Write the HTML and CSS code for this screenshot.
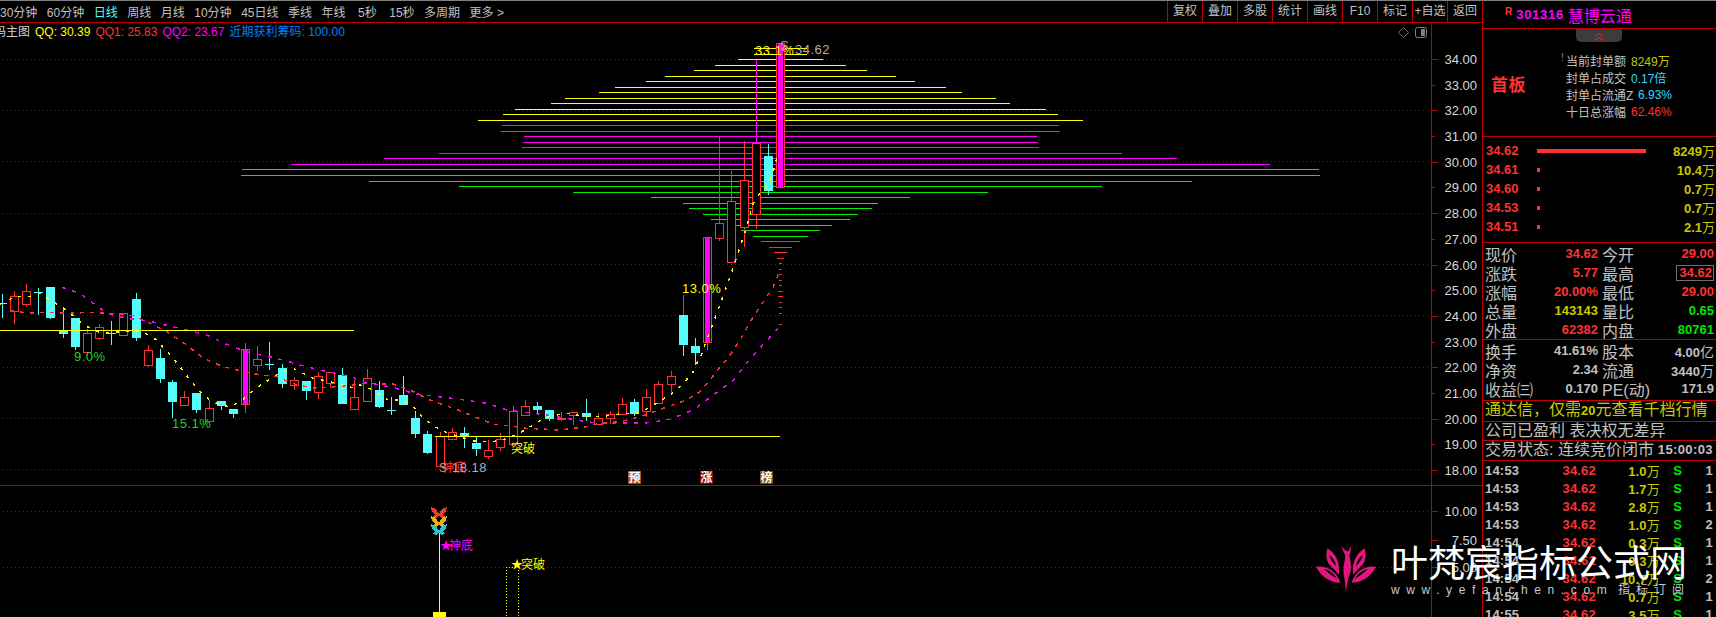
FILE: index.html
```html
<!DOCTYPE html>
<html lang="zh-CN">

<head>
    <meta charset="UTF-8">
    <title>慧博云通 301316</title>
    <link rel="stylesheet" href="styles.css">
</head>

<body>
    <div class="terminal">
        <div class="main">
            <div class="toolbar">
                <div class="periods">
                    <span>30分钟</span>
                    <span>60分钟</span>
                    <span class="active">日线</span>
                    <span>周线</span>
                    <span>月线</span>
                    <span>10分钟</span>
                    <span>45日线</span>
                    <span>季线</span>
                    <span>年线</span>
                    <span class="wide">5秒</span>
                    <span class="wide">15秒</span>
                    <span>多周期</span>
                    <span>更多 &gt;</span>
                </div>
                <div class="tools">
                    <span>复权</span>
                    <span>叠加</span>
                    <span>多股</span>
                    <span>统计</span>
                    <span>画线</span>
                    <span>F10</span>
                    <span>标记</span>
                    <span>+自选</span>
                    <span>返回</span>
                </div>
            </div>

            <div class="chart-wrap">
                <svg id="chart" class="chart" width="1482" height="594" viewBox="0 23 1482 594"></svg>

                <div class="legend">
                    <span class="legend-name">筹码主图</span>
                    <span class="yellow">QQ: 30.39</span>
                    <span class="red">QQ1: 25.83</span>
                    <span class="magenta">QQ2: 23.67</span>
                    <span class="blue">近期获利筹码: 100.00</span>
                </div>

                <svg class="chart-icons" width="32" height="14" viewBox="0 0 32 14">
                    <path d="M5.5 1.5 L10.5 6.5 L5.5 11.5 L0.5 6.5 Z" fill="none" stroke="#707070" />
                    <rect x="17.5" y="1.5" width="11" height="10" rx="2" fill="none" stroke="#808080" />
                    <rect x="23" y="3" width="4" height="7" fill="#808080" />
                </svg>
            </div>
        </div>

        <div class="side">
            <div class="stock">
                <span class="stock-flag">R</span>
                <span class="stock-code">301316</span>
                <span class="stock-name">慧博云通</span>
            </div>

            <div class="seal">
                <div class="seal-tab">
                    <svg width="12" height="8" viewBox="0 0 12 8">
                        <path d="M2 3.5 L6 0.5 L10 3.5 M2 7.5 L6 4.5 L10 7.5" fill="none" stroke="#e03030" />
                    </svg>
                </div>
                <div class="seal-tag">首板</div>
                <div class="seal-info">
                    <span class="seal-label"><i class="seal-mark">!</i>当前封单额</span><span class="olive">8249万</span>
                    <span class="seal-label">封单占成交</span><span class="sky">0.17倍</span>
                    <span class="seal-label">封单占流通Z</span><span class="sky seal-shift">6.93%</span>
                    <span class="seal-label">十日总涨幅</span><span class="red">62.46%</span>
                </div>
            </div>

            <div class="book">
                <div class="book-row"><b class="red">34.62</b><i class="bar bar-full"></i><b class="olive">8249<span class="unit">万</span></b></div>
                <div class="book-row"><b class="red">34.61</b><i class="bar"></i><b class="olive">10.4<span class="unit">万</span></b></div>
                <div class="book-row"><b class="red">34.60</b><i class="bar"></i><b class="olive">0.7<span class="unit">万</span></b></div>
                <div class="book-row"><b class="red">34.53</b><i class="bar"></i><b class="olive">0.7<span class="unit">万</span></b></div>
                <div class="book-row"><b class="red">34.51</b><i class="bar"></i><b class="olive">2.1<span class="unit">万</span></b></div>
            </div>

            <div class="quote">
                <span>现价</span><b class="red">34.62</b><span>今开</span><b class="red">29.00</b>
                <span>涨跌</span><b class="red">5.77</b><span>最高</span><b class="red"><em class="boxed">34.62</em></b>
                <span>涨幅</span><b class="red">20.00%</b><span>最低</span><b class="red">29.00</b>
                <span>总量</span><b class="olive">143143</b><span>量比</span><b class="green">0.65</b>
                <span>外盘</span><b class="red">62382</b><span>内盘</span><b class="green">80761</b>
            </div>

            <div class="quote finance">
                <span>换手</span><b>41.61%</b><span>股本</span><b>4.00<span class="unit">亿</span></b>
                <span>净资</span><b>2.34</b><span>流通</span><b>3440<span class="unit">万</span></b>
                <span>收益㈢</span><b>0.170</b><span>PE(动)</span><b>171.9</b>
            </div>

            <div class="line ad">通达信，仅需<b>20</b>元查看千档行情</div>
            <div class="line note">公司已盈利 表决权无差异</div>
            <div class="line state"><span>交易状态: 连续竞价闭市</span><b>15:00:03</b></div>

            <div class="ticks">
                <div class="tick"><b>14:53</b><b class="red">34.62</b><b class="olive">1.0<span class="unit">万</span></b><b class="green">S</b><b>1</b></div>
                <div class="tick"><b>14:53</b><b class="red">34.62</b><b class="olive">1.7<span class="unit">万</span></b><b class="green">S</b><b>1</b></div>
                <div class="tick"><b>14:53</b><b class="red">34.62</b><b class="olive">2.8<span class="unit">万</span></b><b class="green">S</b><b>1</b></div>
                <div class="tick"><b>14:53</b><b class="red">34.62</b><b class="olive">1.0<span class="unit">万</span></b><b class="green">S</b><b>2</b></div>
                <div class="tick"><b>14:54</b><b class="red">34.62</b><b class="olive">0.3<span class="unit">万</span></b><b class="green">S</b><b>1</b></div>
                <div class="tick"><b>14:54</b><b class="red">34.62</b><b class="olive">0.3<span class="unit">万</span></b><b class="green">S</b><b>1</b></div>
                <div class="tick"><b>14:54</b><b class="red">34.62</b><b class="olive">10.7<span class="unit">万</span></b><b class="green">S</b><b>2</b></div>
                <div class="tick"><b>14:54</b><b class="red">34.62</b><b class="olive">0.7<span class="unit">万</span></b><b class="green">S</b><b>1</b></div>
                <div class="tick"><b>14:55</b><b class="red">34.62</b><b class="olive">3.5<span class="unit">万</span></b><b class="green">S</b><b>1</b></div>
            </div>
        </div>

        <!-- site watermark lies over the chart and the panel -->
        <div class="watermark">
            <svg class="lotus" width="70" height="60" viewBox="0 0 210 180">
                <path d="M18 80 C50 76 78 92 92 128 C60 128 34 110 18 80 Z M42 86 C56 100 70 110 82 116 C72 100 58 90 42 86 Z" fill-rule="evenodd" />
                <path d="M198 80 C166 76 138 92 124 128 C156 128 182 110 198 80 Z M174 86 C160 100 146 110 134 116 C144 100 158 90 174 86 Z" fill-rule="evenodd" />
                <path d="M52 25 C78 42 92 68 86 106 C76 88 62 80 54 68 C48 56 48 40 52 25 Z M58 44 C60 58 68 68 78 78 C76 62 68 52 58 44 Z" fill-rule="evenodd" />
                <path d="M164 25 C138 42 124 68 130 106 C140 88 154 80 162 68 C168 56 168 40 164 25 Z M158 44 C156 58 148 68 138 78 C140 62 148 52 158 44 Z" fill-rule="evenodd" />
                <path d="M108 158 L103 112 C96 84 106 62 106 46 C100 36 97 26 95 17 C102 28 108 34 112 34 C116 34 120 26 122 14 C124 30 121 40 118 46 C124 70 125 92 118 106 C112 122 110 140 108 158 Z" />
            </svg>
            <div class="watermark-text">
                <div class="watermark-title">叶梵宸指标公式网</div>
                <div class="watermark-sub"><span class="watermark-url">www.yefanchen.com</span><span class="watermark-link">指标订阅</span></div>
            </div>
        </div>
    </div>

    <script src="chart.js"></script>
</body>

</html>
```

FILE: styles.css
```css
* {
    box-sizing: border-box;
}

body {
    margin: 0;
    background-color: #000000;
    color: #c0c0c0;
    font-family: "Liberation Sans", "Noto Sans CJK SC", sans-serif;
    font-size: 12px;
    overflow: hidden;
}

.terminal {
    position: relative;
    display: flex;
    width: 1716px;
    height: 617px;
    overflow: hidden;
}

.main {
    width: 1482px;
    flex: none;
}

/* top bar */
.toolbar {
    display: flex;
    justify-content: space-between;
    height: 23px;
    border-top: 1px solid #808080;
    border-bottom: 1px solid #c00000;
}

.periods {
    display: flex;
    align-items: center;
    gap: 9.5px;
    white-space: nowrap;
}

.periods .active {
    color: #54fcfc;
}

.periods .wide {
    margin-left: 3px;
}

.tools {
    display: flex;
}

.tools span {
    width: 35px;
    line-height: 21px;
    text-align: center;
    white-space: nowrap;
    border-left: 1px solid #c00000;
}

/* chart */
.chart-wrap {
    position: relative;
}

.chart {
    display: block;
}

.legend {
    position: absolute;
    top: 2px;
    left: 0;
    display: flex;
    gap: 5px;
    line-height: 15px;
    white-space: nowrap;
}

.legend-name {
    width: 30px;
    overflow: hidden;
    direction: rtl;
    color: #d0d0d0;
}

.chart-icons {
    position: absolute;
    top: 3px;
    left: 1398px;
}

.chart text {
    font-family: "Liberation Sans", "Noto Sans CJK SC", sans-serif;
    font-size: 12px;
}

.chart .axis-label {
    fill: #d8d8d8;
    text-anchor: end;
    font-size: 13px;
}

.chart .mark {
    font-size: 13px;
    letter-spacing: 0.5px;
}

.chart .badge {
    fill: #ffffff;
    text-anchor: middle;
    font-weight: bold;
}

/* right panel */
.side {
    width: 234px;
    flex: none;
    border-left: 1px solid #c00000;
    border-top: 1px solid #808080;
}

.stock {
    display: flex;
    align-items: center;
    height: 28px;
    padding-left: 22px;
    border-bottom: 1px solid #c00000;
    color: #ff00ff;
    white-space: nowrap;
}

.stock-flag {
    margin-bottom: 6px;
    margin-right: 4px;
    color: #ff3232;
    font-size: 10px;
    font-weight: bold;
}

.stock-code {
    margin-right: 4px;
    font-size: 13px;
    font-weight: bold;
    letter-spacing: 0.7px;
}

.stock-name {
    font-size: 16px;
}

.seal {
    position: relative;
    display: flex;
    align-items: flex-start;
    height: 108px;
    padding: 23px 0 0 8px;
    border-bottom: 1px solid #c00000;
}

.seal-tab {
    position: absolute;
    top: 0;
    left: 93px;
    width: 46px;
    height: 13px;
    padding-top: 1px;
    border-radius: 0 0 5px 5px;
    background-color: #3c3c3c;
    text-align: center;
}

.seal-tag {
    width: 75px;
    margin-top: 19px;
    color: #ff3232;
    font-size: 17px;
    font-weight: bold;
    letter-spacing: 0.5px;
}

.seal-info {
    display: grid;
    grid-template-columns: 65px auto;
    grid-auto-rows: 17px;
    align-items: center;
    white-space: nowrap;
}

.seal-label {
    position: relative;
}

.seal-mark {
    position: absolute;
    left: -5px;
    color: #808080;
    font-style: normal;
    font-size: 10px;
}

.seal-shift {
    margin-left: 7px;
}

.book {
    height: 106px;
    padding: 4px 1px 0 3px;
    border-bottom: 1px solid #c00000;
}

.book-row {
    display: grid;
    grid-template-columns: 51px 1fr auto;
    align-items: center;
    height: 19px;
    font-size: 13px;
}

.bar {
    display: block;
    width: 3px;
    height: 4px;
    background-color: #ff3232;
}

.bar-full {
    width: 109px;
}

.unit {
    font-weight: normal;
    font-size: 13px;
}

.quote {
    display: grid;
    grid-template-columns: 40px 73px 4px 40px 72px;
    grid-auto-rows: 19px;
    align-items: center;
    height: 97px;
    padding: 1px 0 0 2px;
    border-bottom: 1px solid #c00000;
    color: #c0c0c0;
    font-size: 16px;
    white-space: nowrap;
}

.quote b {
    font-size: 13px;
    text-align: right;
}

.quote span:nth-of-type(even) {
    grid-column: 4;
}

.quote .unit {
    font-size: 14px;
}

.boxed {
    display: inline-block;
    height: 16px;
    padding: 0 1px 0 2px;
    border: 1px solid #707070;
    font-style: normal;
    line-height: 14px;
}

.finance {
    height: 61px;
}

.line {
    height: 20px;
    padding-left: 2px;
    border-bottom: 1px solid #c00000;
    font-size: 16px;
    line-height: 18px;
    white-space: nowrap;
}

.ad {
    height: 21px;
    color: #c8c800;
}

.ad b {
    font-size: 13px;
}

.note {
    height: 19px;
}

.state {
    display: flex;
    justify-content: space-between;
    padding-right: 3px;
}

.state b {
    font-size: 13px;
    letter-spacing: 0.4px;
}

.tick {
    display: grid;
    grid-template-columns: 36px 75px 64px 22px 31px;
    align-items: center;
    height: 18px;
    padding-left: 2px;
    font-size: 13px;
    letter-spacing: 0.2px;
}

.tick b {
    text-align: right;
}

.tick b:first-child {
    text-align: left;
}

.yellow {
    color: #ffff00;
}

.red {
    color: #ff3232;
}

.magenta {
    color: #ff00ff;
}

.blue {
    color: #0080ff;
}

.olive {
    color: #c8c800;
}

.sky {
    color: #30d8ff;
}

.green {
    color: #00e600;
}

/* watermark */
.watermark {
    position: absolute;
    top: 540px;
    left: 1310px;
    display: flex;
    pointer-events: none;
}

.lotus {
    flex: none;
    fill: #e5157f;
    margin-right: 11px;
}

.watermark-title {
    color: #ffffff;
    font-family: "Noto Sans CJK SC", sans-serif;
    font-size: 37px;
    line-height: 42px;
    white-space: nowrap;
}

.watermark-sub {
    display: flex;
    margin-top: 1px;
    font-size: 12px;
    line-height: 14px;
    color: #c8c8c8;
    white-space: nowrap;
}

.watermark-url {
    width: 227px;
    letter-spacing: 6.6px;
}

.watermark-link {
    letter-spacing: 6px;
}
```

FILE: chart.js
```js
// everything is in screen pixels, the svg viewBox starts at y=23
const svg = document.getElementById('chart');
let out = '';

const RED = '#ff3232';
const CYAN = '#54fcfc';
const MAGENTA = '#ff00ff';
const YELLOW = '#ffff00';
const GREEN = '#00f000';
const GRID = '#a80000';
const LINE = '#c00000';

function hline(x1, x2, y, color, extra) {
    out += `<line x1="${x1}" x2="${x2}" y1="${y + 0.5}" y2="${y + 0.5}" stroke="${color}" ${extra || ''}/>`;
}

function vline(x, y1, y2, color, extra) {
    out += `<line x1="${x + 0.5}" x2="${x + 0.5}" y1="${y1}" y2="${y2}" stroke="${color}" ${extra || ''}/>`;
}

function label(x, y, text, cls, color) {
    out += `<text x="${x}" y="${y}" class="${cls || ''}" ${color ? `fill="${color}"` : ''}>${text}</text>`;
}

// grid + axis
[59, 110, 161, 213, 264, 315, 367, 418, 469, 511, 567].forEach(function (y) {
    hline(3, 1431, y, GRID, 'stroke-dasharray="1 3"');
});

vline(1431, 23, 617, LINE);
hline(0, 1482, 485, LINE);

const prices = ['34.00', '33.00', '32.00', '31.00', '30.00', '29.00', '28.00', '27.00', '26.00', '25.00', '24.00', '23.00', '22.00', '21.00', '20.00', '19.00', '18.00'];
prices.forEach(function (text, i) {
    const y = Math.round(59 + i * 25.69);
    hline(1431, i % 2 ? 1435 : 1438, y, LINE);
    label(1477, y + 5, text, 'axis-label');
});

[[511, '10.00'], [540, '7.50'], [567, '5.00']].forEach(function (item) {
    hline(1431, 1438, item[0], LINE);
    label(1477, item[0] + 5, item[1], 'axis-label');
});

// chip distribution: y, left, right
const chips = [
    [48, 754, 807, YELLOW], [54, 754, 807, YELLOW], [59, 738, 823, YELLOW], [65, 715, 846, YELLOW],
    [70, 694, 867, YELLOW], [76, 665, 896, YELLOW], [81, 646, 915, YELLOW], [87, 615, 946, YELLOW],
    [92, 599, 962, YELLOW], [98, 565, 996, YELLOW], [103, 551, 1010, YELLOW], [109, 515, 1046, YELLOW],
    [114, 503, 1058, YELLOW], [120, 478, 1083, YELLOW],
    [125, 502, 1059, MAGENTA], [131, 501, 1060, MAGENTA], [136, 524, 1037, MAGENTA], [142, 523, 1038, MAGENTA],
    [147, 522, 1039, MAGENTA], [153, 439, 1122, MAGENTA], [158, 384, 1177, MAGENTA], [164, 291, 1270, MAGENTA],
    [169, 242, 1319, GREEN], [175, 241, 1320, GREEN], [181, 369, 1192, GREEN], [186, 459, 1102, GREEN],
    [192, 573, 988, GREEN], [197, 651, 910, GREEN], [203, 683, 878, GREEN], [208, 689, 872, GREEN],
    [214, 703, 858, GREEN], [219, 711, 850, GREEN], [225, 729, 832, GREEN], [230, 741, 820, GREEN], [236, 753, 808, GREEN],
    [241, 761, 800, RED], [247, 769, 792, RED], [252, 774, 787, RED], [258, 777, 784, RED], [263, 779, 782, RED],
    [269, 779, 782, RED], [274, 779, 782, RED], [280, 779, 782, RED], [285, 779, 782, RED], [291, 778, 783, RED],
    [296, 778, 783, RED], [302, 779, 782, RED], [307, 779, 782, RED], [313, 779, 782, RED], [324, 779, 782, RED]
];
chips.forEach(function (c) {
    hline(c[1], c[2], c[0], c[3]);
});

// candles: top, bottom, high, low, type (r hollow, c solid, m limit up), wick colour
const candles = [
    [303, 304, 294, 318, 'c'], [296, 311, 291, 324, 'r'], [291, 304, 284, 307, 'r'], [292, 293, 288, 315, 'c'],
    [287, 318, 287, 319, 'c'], [330, 334, 307, 338, 'c'], [318, 347, 318, 350, 'c'], [333, 352, 329, 356, 'r'],
    [327, 338, 324, 340, 'r'], [333, 334, 321, 345, 'c'], [313, 335, 313, 336, 'r'], [299, 338, 293, 341, 'c'],
    [350, 365, 345, 367, 'r'], [358, 379, 349, 383, 'c'], [382, 402, 380, 418, 'c'], [397, 405, 391, 405, 'r'],
    [393, 410, 393, 413, 'c'], [408, 421, 400, 423, 'r'], [401, 406, 401, 410, 'c'], [409, 414, 409, 418, 'c'],
    [349, 404, 343, 413, 'm'], [359, 365, 346, 371, 'r'], [364, 365, 342, 370, 'c'], [368, 384, 364, 388, 'c'],
    [380, 385, 377, 390, 'r'], [381, 391, 381, 400, 'c'], [376, 392, 372, 399, 'r'], [372, 383, 372, 388, 'r'],
    [375, 404, 368, 404, 'c'], [397, 409, 380, 410, 'r'], [378, 401, 369, 401, 'r'], [390, 407, 381, 408, 'c'],
    [410, 411, 397, 415, 'c'], [395, 405, 376, 405, 'c'], [418, 434, 411, 438, 'c'], [434, 453, 431, 454, 'c'],
    [436, 466, 432, 466, 'r'], [432, 439, 428, 439, 'r'], [433, 436, 427, 448, 'c'], [443, 449, 437, 456, 'c'],
    [450, 456, 440, 459, 'r'], [439, 447, 433, 451, 'r'], [411, 444, 406, 444, 'r'], [406, 415, 400, 415, 'r'],
    [406, 410, 402, 414, 'c'], [410, 419, 410, 421, 'c'], [418, 419, 412, 421, 'r'], [412, 415, 412, 425, 'r'],
    [413, 417, 399, 421, 'c'], [418, 424, 413, 425, 'r'], [414, 418, 411, 424, 'r'], [404, 414, 398, 414, 'r'],
    [402, 414, 399, 416, 'c'], [397, 411, 389, 417, 'r'], [384, 403, 381, 403, 'r'], [376, 384, 371, 393, 'r'],
    [315, 345, 295, 356, 'c', MAGENTA], [346, 353, 338, 365, 'c'], [237, 342, 237, 350, 'm'],
    [223, 238, 137, 241, 'r', MAGENTA], [201, 262, 171, 262, 'r'], [180, 227, 141, 247, 'r'],
    [143, 214, 60, 229, 'r', MAGENTA], [156, 191, 144, 195, 'c'], [43, 187, 43, 187, 'm']
];

candles.forEach(function (c, i) {
    const x = Math.round(10 + 12.16 * (i - 1));
    const mid = x + 4;
    const wick = c[4] === 'c' ? CYAN : RED;
    vline(mid, c[2], c[3], wick);
    if (c[5]) {
        vline(mid, c[2], c[0], c[5]);
    }
    if (c[4] === 'c') {
        out += `<rect x="${x}" y="${c[0]}" width="9" height="${c[1] - c[0]}" fill="${CYAN}"/>`;
    } else {
        out += `<rect x="${x + 0.5}" y="${c[0] + 0.5}" width="8" height="${c[1] - c[0]}" fill="#000000" stroke="${RED}"/>`;
    }
    if (c[4] === 'm') {
        out += `<rect x="${x + 2}" y="${c[0] + 1}" width="5" height="${c[1] - c[0] - 1}" fill="${MAGENTA}"/>`;
    }
});

// moving averages were read off 3x crops, so each piece has its crop's origin
function crop(ox, oy, pts) {
    return pts.map(function (p) {
        return (ox + p[0] / 3).toFixed(1) + ',' + (oy + p[1] / 3).toFixed(1);
    }).join(' ');
}

function maLine(color, dash, width, pieces) {
    const pts = pieces.map(function (p) {
        return crop(p[0], p[1], p[2]);
    }).join(' ');
    out += `<polyline points="${pts}" fill="none" stroke="${color}" stroke-width="${width}" stroke-dasharray="${dash}"/>`;
}

maLine(MAGENTA, '4 7', 1.5, [
    [0, 270, [[185, 52], [240, 70], [280, 100], [320, 130], [380, 145], [440, 152], [540, 175], [620, 195], [700, 232], [760, 250], [830, 265], [900, 285], [960, 300], [1060, 322]]],
    [360, 380, [[0, 5], [90, 20], [170, 42], [300, 58], [380, 70], [440, 90], [560, 105], [680, 125]]],
    [600, 360, [[0, 190], [60, 190], [150, 188], [210, 178], [280, 150], [340, 105], [400, 60], [440, 10]]],
    [640, 30, [[330, 988], [400, 910], [420, 890]]]
]);

maLine(RED, '4 6', 1.5, [
    [0, 270, [[30, 120], [80, 130], [150, 127], [210, 130], [270, 127], [330, 130], [400, 137], [450, 160], [500, 185], [560, 225], [610, 265], [670, 290], [720, 302], [770, 313], [830, 320], [890, 345], [950, 355], [1060, 345]]],
    [360, 380, [[0, 10], [100, 12], [150, 30], [210, 60], [280, 85], [340, 108], [400, 133], [445, 137], [500, 145], [600, 150], [680, 140]]],
    [600, 360, [[0, 190], [60, 185], [120, 170], [190, 145], [260, 120], [300, 95], [330, 60], [360, 20], [380, 0]]],
    [640, 30, [[268, 978], [300, 930], [340, 860], [400, 770], [420, 720]]]
]);

maLine(YELLOW, '3 7', 1.5, [
    [0, 270, [[0, 103], [45, 80], [90, 80], [120, 70], [150, 90], [180, 108], [210, 130], [240, 155], [270, 175], [300, 187], [330, 190], [360, 185], [390, 183], [430, 187], [470, 210], [510, 255], [540, 290], [570, 330], [600, 365], [630, 390], [660, 405], [690, 410], [720, 395], [750, 370], [790, 340], [830, 315], [880, 295], [910, 310], [940, 325], [990, 335], [1065, 355]]],
    [360, 380, [[0, 15], [40, 30], [80, 58], [130, 62], [165, 85], [190, 115], [225, 140], [260, 158], [300, 170], [340, 183], [400, 185], [445, 175], [480, 158], [520, 135], [560, 110], [620, 100], [680, 110]]],
    [600, 360, [[0, 170], [60, 162], [120, 158], [160, 135], [210, 105], [250, 70], [280, 35], [295, 0]]],
    [640, 30, [[178, 990], [215, 890], [240, 825], [270, 740], [300, 650], [320, 590], [340, 520], [360, 490], [385, 465], [400, 420], [410, 385]]]
]);

// long yellow levels
hline(0, 354, 330, YELLOW);
hline(435, 780, 436, YELLOW);

// text marks on the chart
label(74, 361, '9.0%', 'mark', '#20d020');
label(172, 428, '15.1%', 'mark', '#20d020');
label(682, 293, '13.0%', 'mark', YELLOW);
label(755, 55, '33.1%', 'mark', YELLOW);
label(780, 50, 'S', 'mark', '#a0a0a0');
label(795, 54, '34.62', 'mark', '#b0b0b0');
label(511, 453, '突破', '', YELLOW);
label(442, 472, '神底', '', RED);
label(439, 472, 'S', '', '#a0a0a0');
label(452, 472, '18.18', 'mark', '#b0b0b0');

// event badges
[[628, '预', '#b04a10'], [700, '涨', '#8a0010'], [760, '榜', '#7c4a08']].forEach(function (b) {
    out += `<rect x="${b[0]}" y="471" width="13" height="13" fill="${b[2]}"/>`;
    label(b[0] + 6.5, 482, b[1], 'badge');
});

// sub chart
[[513, '#e8402a'], [522, '#e8b020'], [530, '#30c0d0']].forEach(function (b) {
    out += `<path transform="translate(439 ${b[0]})" d="M0 1 L-3 -4 L-8 -6 L-7 -1 L-4 1 L-6 4 L-2 5 L0 2 L2 5 L6 4 L4 1 L7 -1 L8 -6 L3 -4 Z" fill="${b[1]}"/>`;
});
vline(439, 533, 612, YELLOW);
out += `<rect x="433" y="612" width="13" height="5" fill="${YELLOW}"/>`;
label(440, 550, '★', '', MAGENTA);
label(449, 550, '神底', '', MAGENTA);
label(511, 569, '★', '', YELLOW);
label(521, 569, '突破', '', YELLOW);
hline(506, 518, 567, YELLOW, 'stroke-dasharray="1 2"');
vline(506, 567, 617, YELLOW, 'stroke-dasharray="1 2"');
vline(518, 567, 617, YELLOW, 'stroke-dasharray="1 2"');

svg.innerHTML = out;
svg.setAttribute('shape-rendering', 'crispEdges');
```
